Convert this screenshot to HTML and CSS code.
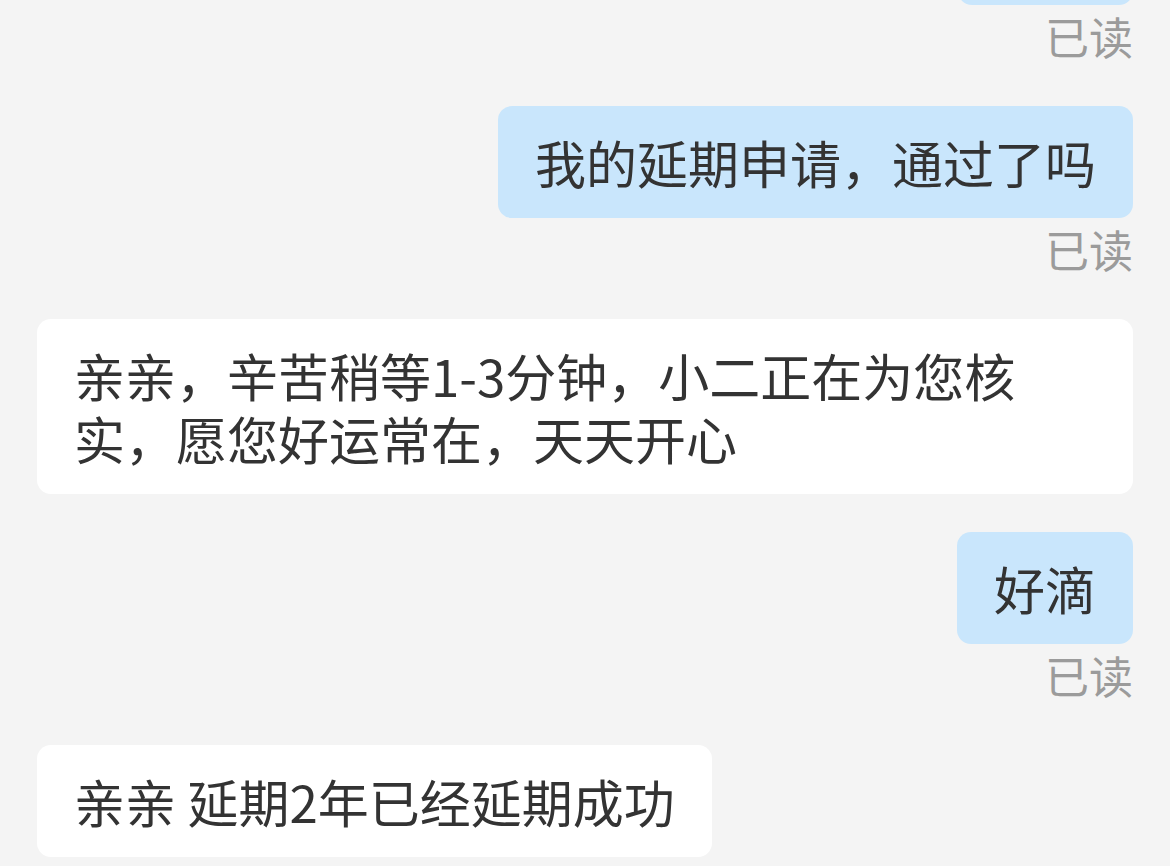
FILE: index.html
```html
<!DOCTYPE html>
<html lang="zh-CN">
<head>
  <meta charset="UTF-8">
  <meta name="viewport" content="width=device-width, initial-scale=1.0">
  <title>聊天</title>
  <link rel="stylesheet" href="styles.css">
</head>
<body>
  <section class="chat">
    <div class="msg msg-out">
      <div class="bubble bubble-out bubble-clipped"></div>
      <span class="read">已读</span>
    </div>

    <div class="msg msg-out">
      <div class="bubble bubble-out">我的延期申请，通过了吗</div>
      <span class="read">已读</span>
    </div>

    <div class="msg msg-in">
      <div class="bubble bubble-in">亲亲，辛苦稍等1-3分钟，小二正在为您核实，愿您好运常在，天天开心</div>
    </div>

    <div class="msg msg-out">
      <div class="bubble bubble-out">好滴</div>
      <span class="read">已读</span>
    </div>

    <div class="msg msg-in">
      <div class="bubble bubble-in">亲亲 延期2年已经延期成功</div>
    </div>
  </section>
</body>
</html>
```

FILE: styles.css
```css
body {
  margin: 0;
  background-color: #f4f4f4;
  font-family: "Noto Sans CJK SC", "Noto Sans", sans-serif;
  color: #333;
}
.chat {
  display: flex;
  flex-direction: column;
  gap: 38px;
  padding: 0 37px;
  margin-top: -107px;
}
.msg {
  display: flex;
  flex-direction: column;
}
.msg-out {
  align-items: flex-end;
}
.msg-in {
  align-items: flex-start;
}
.bubble {
  max-width: 100%;
  box-sizing: border-box;
  padding: 24.5px 37px;
  border-radius: 14px;
  font-size: 51px;
  line-height: 63px;
}
.bubble-out {
  background-color: #c9e6fc;
}
.bubble-in {
  background-color: #fff;
}
.bubble-clipped {
  width: 175px;
  height: 112px;
}
.read {
  font-size: 44px;
  line-height: 63px;
  color: #9b9b9b;
}
```
